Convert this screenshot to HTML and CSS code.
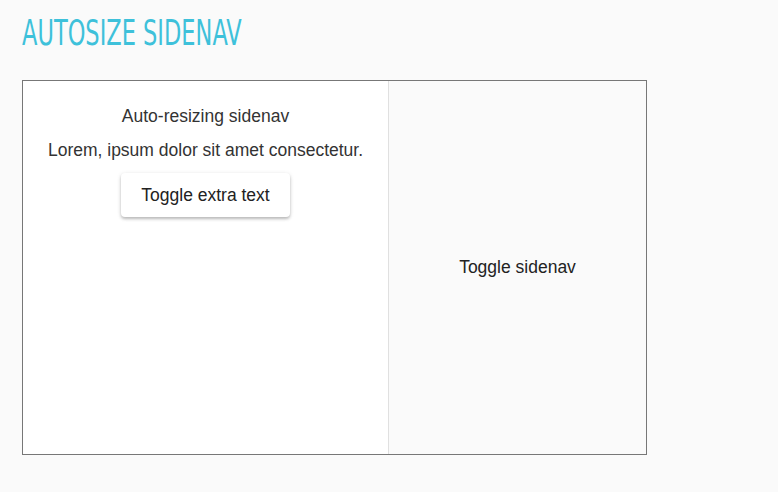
FILE: index.html
```html
<!DOCTYPE html>
<html>
<head>
<meta charset="utf-8">
<link rel="stylesheet" href="styles.css">
</head>
<body>
<h1 class="title">AUTOSIZE SIDENAV</h1>
<div class="container">
  <aside class="sidenav">
    <p class="line">Auto-resizing sidenav</p>
    <p class="line line-gap">Lorem, ipsum dolor sit amet consectetur.</p>
    <button class="btn">Toggle extra text</button>
  </aside>
  <main class="content">
    <span class="toggle">Toggle sidenav</span>
  </main>
</div>
</body>
</html>
```
FILE: styles.css
```css
html, body {
  margin: 0;
  padding: 0;
  background: #fafafa;
}
body {
  padding: 0 22px;
  font-family: "Liberation Sans", Arial, sans-serif;
  color: #222;
}
.title {
  margin: 0;
  padding-top: 14px;
  height: 80px;
  box-sizing: border-box;
  font-family: "Liberation Sans Narrow", "DejaVu Sans Condensed", sans-serif;
  font-stretch: condensed;
  font-weight: normal;
  font-size: 35px;
  line-height: 38px;
  color: #3ec1da;
  transform: scaleX(0.715);
  transform-origin: left center;
  white-space: nowrap;
}
.container {
  width: 625px;
  height: 375px;
  box-sizing: border-box;
  border: 1px solid #777;
  display: flex;
}
.sidenav {
  width: 366px;
  box-sizing: border-box;
  background: #fff;
  border-right: 1px solid #e0e0e0;
  padding-top: 26px;
  display: flex;
  flex-direction: column;
  align-items: center;
}
.line {
  margin: 0 0 15px;
  font-size: 17.5px;
  line-height: 19px;
  color: #333;
}
.line-gap {
  margin-bottom: 13px;
}
.btn {
  width: 169px;
  height: 44px;
  border: none;
  border-radius: 4px;
  background: #fff;
  font-family: "Liberation Sans", Arial, sans-serif;
  font-size: 17.5px;
  color: #222;
  box-shadow: 0 2px 3px rgba(0,0,0,0.22), 0 1px 5px rgba(0,0,0,0.10);
  cursor: pointer;
}
.content {
  flex: 1;
  display: flex;
  align-items: center;
  justify-content: center;
  background: #fafafa;
}
.toggle {
  font-size: 17.5px;
  color: #222;
}
```
